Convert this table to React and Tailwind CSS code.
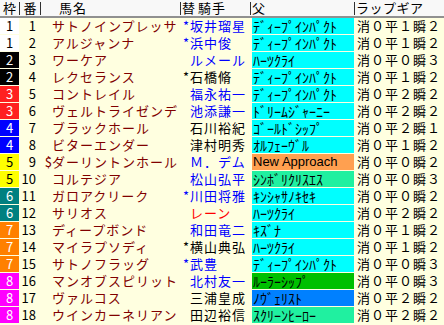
import React from 'react';

const FRAME = {
  1: 'bg-white text-black',
  2: 'bg-black text-white',
  3: 'bg-[#ff2020] text-white',
  4: 'bg-[#0000ff] text-white',
  5: 'bg-[#ffff00] text-black',
  6: 'bg-[#008080] text-white',
  7: 'bg-[#ff8000] text-white',
  8: 'bg-[#ff00ff] text-white',
};

const SIRE = {
  cyan: 'bg-[#00ffff]',
  orange: 'bg-[#ffa050]',
  mint: 'bg-[#20f0a0]',
  green: 'bg-[#00c000]',
  blue: 'bg-[#0080ff]',
};

const JOCKEY = {
  b: 'text-[#0000ff]',
  k: 'text-black',
  r: 'text-[#ff0000]',
};

// 枠, 番, 印, 馬名, 替, 騎手, 色, 父, 色, ラップギア
const horses = [
  [1, 1, '', 'サトノインプレッサ', '*', '坂井瑠星', 'b', 'ﾃﾞｨｰﾌﾟｲﾝﾊﾟｸﾄ', 'cyan', '消０平１瞬２'],
  [1, 2, '', 'アルジャンナ', '*', '浜中俊', 'b', 'ﾃﾞｨｰﾌﾟｲﾝﾊﾟｸﾄ', 'cyan', '消０平１瞬２'],
  [2, 3, '', 'ワーケア', '', 'ルメール', 'b', 'ﾊｰﾂｸﾗｲ', 'cyan', '消０平０瞬３'],
  [2, 4, '', 'レクセランス', '*', '石橋脩', 'k', 'ﾃﾞｨｰﾌﾟｲﾝﾊﾟｸﾄ', 'cyan', '消０平１瞬２'],
  [3, 5, '', 'コントレイル', '', '福永祐一', 'b', 'ﾃﾞｨｰﾌﾟｲﾝﾊﾟｸﾄ', 'cyan', '消０平２瞬２'],
  [3, 6, '', 'ヴェルトライゼンデ', '', '池添謙一', 'b', 'ﾄﾞﾘｰﾑｼﾞｬｰﾆｰ', 'cyan', '消０平２瞬２'],
  [4, 7, '', 'ブラックホール', '', '石川裕紀', 'k', 'ｺﾞｰﾙﾄﾞｼｯﾌﾟ', 'cyan', '消０平２瞬１'],
  [4, 8, '', 'ビターエンダー', '', '津村明秀', 'k', 'ｵﾙﾌｪｰｳﾞﾙ', 'cyan', '消０平１瞬２'],
  [5, 9, '$', 'ダーリントンホール', '', 'Ｍ．デム', 'b', 'New Approach', 'orange', '消０平０瞬２'],
  [5, 10, '', 'コルテジア', '', '松山弘平', 'b', 'ｼﾝﾎﾞﾘｸﾘｽｴｽ', 'mint', '消０平０瞬３'],
  [6, 11, '', 'ガロアクリーク', '*', '川田将雅', 'b', 'ｷﾝｼｬｻﾉｷｾｷ', 'cyan', '消０平０瞬２'],
  [6, 12, '', 'サリオス', '', 'レーン', 'r', 'ﾊｰﾂｸﾗｲ', 'cyan', '消０平２瞬２'],
  [7, 13, '', 'ディープボンド', '', '和田竜二', 'b', 'ｷｽﾞﾅ', 'cyan', '消０平１瞬２'],
  [7, 14, '', 'マイラプソディ', '*', '横山典弘', 'k', 'ﾊｰﾂｸﾗｲ', 'cyan', '消０平１瞬２'],
  [7, 15, '', 'サトノフラッグ', '*', '武豊', 'b', 'ﾃﾞｨｰﾌﾟｲﾝﾊﾟｸﾄ', 'cyan', '消０平０瞬３'],
  [8, 16, '', 'マンオブスピリット', '', '北村友一', 'b', 'ﾙｰﾗｰｼｯﾌﾟ', 'green', '消０平０瞬３'],
  [8, 17, '', 'ヴァルコス', '', '三浦皇成', 'k', 'ﾉｳﾞｪﾘｽﾄ', 'blue', '消０平２瞬２'],
  [8, 18, '', 'ウインカーネリアン', '', '田辺裕信', 'k', 'ｽｸﾘｰﾝﾋｰﾛｰ', 'mint', '消０平２瞬２'],
];

const font = { fontFamily: '"Noto Sans CJK JP", "Liberation Sans", sans-serif' };

function Sep() {
  return <div className="w-px h-[13px] bg-[#303030] self-center" />;
}

export default function App() {
  return (
    <div className="w-[444px] h-[325px] bg-[#ffffe0] overflow-hidden text-black" style={font}>
      {/* ヘッダー */}
      <div className="flex h-[18px] bg-[#f8f8f8] border-b-2 border-[#909090] text-[13px] leading-[16px] items-center">
        <div className="w-[19px] text-center">枠</div>
        <Sep />
        <div className="w-[20px] text-center">番</div>
        <Sep />
        <div className="w-[139px] pl-[18px] tracking-[1px]">馬名</div>
        <Sep />
        <div className="w-[69px] pl-[1px] flex tracking-[1px]">
          <span className="w-[16px]">替</span>
          <span>騎手</span>
        </div>
        <Sep />
        <div className="w-[103px] pl-[1px]">父</div>
        <Sep />
        <div className="flex-1 pl-[1px] tracking-[0.5px]">ラップギア</div>
      </div>

      {/* 本体 */}
      {horses.map(([waku, ban, mark, name, sub, jockey, jc, sire, sc, lap]) => {
        const latin = /^[A-Za-z ]+$/.test(sire);
        return (
          <div key={ban} className="flex h-[17px] leading-[16px]">
            <div className={`w-[19px] h-[16px] text-center text-[13px] ${FRAME[waku]}`}>{waku}</div>
            <div className="w-[22px] pr-[5px] text-right text-[13px]">{ban}</div>
            <div className="w-[140px] flex text-[13px] text-[#800000] tracking-[1px] whitespace-nowrap overflow-hidden">
              <span className="w-[11px] text-right tracking-normal">{mark}</span>
              <span>{name}</span>
            </div>
            <div className={`w-[70px] flex text-[13px] tracking-[1px] whitespace-nowrap ${JOCKEY[jc]}`}>
              <span className="w-[9px] pl-[2px] tracking-normal">{sub}</span>
              <span>{jockey}</span>
            </div>
            <div className="w-[104px] pl-[1px] pr-[1px]">
              <div
                className={`h-[16px] pl-[1px] whitespace-nowrap overflow-hidden ${SIRE[sc]} ${
                  latin ? "font-['Liberation_Sans'] text-[13px]" : 'text-[14px]'
                }`}
              >
                {sire}
              </div>
            </div>
            <div className="flex-1 pl-[2px] text-[13px] tracking-[1px] whitespace-nowrap">{lap}</div>
          </div>
        );
      })}
    </div>
  );
}
